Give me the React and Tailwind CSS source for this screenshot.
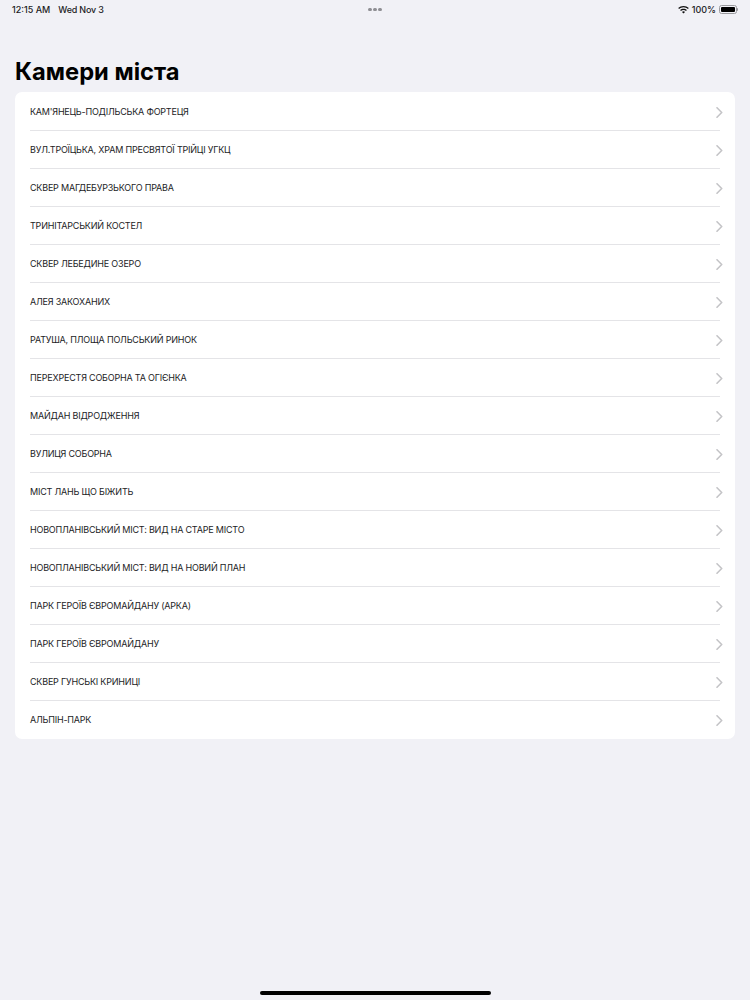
const cameras = [
  "КАМ'ЯНЕЦЬ-ПОДІЛЬСЬКА ФОРТЕЦЯ",
  "ВУЛ.ТРОЇЦЬКА, ХРАМ ПРЕСВЯТОЇ ТРІЙЦІ УГКЦ",
  "СКВЕР МАГДЕБУРЗЬКОГО ПРАВА",
  "ТРИНІТАРСЬКИЙ КОСТЕЛ",
  "СКВЕР ЛЕБЕДИНЕ ОЗЕРО",
  "АЛЕЯ ЗАКОХАНИХ",
  "РАТУША, ПЛОЩА ПОЛЬСЬКИЙ РИНОК",
  "ПЕРЕХРЕСТЯ СОБОРНА ТА ОГІЄНКА",
  "МАЙДАН ВІДРОДЖЕННЯ",
  "ВУЛИЦЯ СОБОРНА",
  "МІСТ ЛАНЬ ЩО БІЖИТЬ",
  "НОВОПЛАНІВСЬКИЙ МІСТ: ВИД НА СТАРЕ МІСТО",
  "НОВОПЛАНІВСЬКИЙ МІСТ: ВИД НА НОВИЙ ПЛАН",
  "ПАРК ГЕРОЇВ ЄВРОМАЙДАНУ (АРКА)",
  "ПАРК ГЕРОЇВ ЄВРОМАЙДАНУ",
  "СКВЕР ГУНСЬКІ КРИНИЦІ",
  "АЛЬПІН-ПАРК",
];

function Chevron() {
  return (
    <svg width="7" height="11" viewBox="0 0 7 11" fill="none" className="shrink-0">
      <path d="M1 0.8L5.7 5.5L1 10.2" stroke="#c4c4c7" strokeWidth="1.6" strokeLinecap="round" strokeLinejoin="round" />
    </svg>
  );
}

function Wifi() {
  return (
    <svg width="11" height="8" viewBox="0 0 11 8" fill="#111">
      <path d="M5.5 0C3.4 0 1.6 0.8 0.2 2.1L1.1 3.1C2.3 2 3.8 1.3 5.5 1.3C7.2 1.3 8.7 2 9.9 3.1L10.8 2.1C9.4 0.8 7.6 0 5.5 0Z" />
      <path d="M5.5 2.7C4.2 2.7 3 3.2 2.1 4L3 5C3.7 4.4 4.5 4 5.5 4C6.5 4 7.3 4.4 8 5L8.9 4C8 3.2 6.8 2.7 5.5 2.7Z" />
      <path d="M5.5 5.3C4.9 5.3 4.4 5.5 4 5.9L5.5 7.6L7 5.9C6.6 5.5 6.1 5.3 5.5 5.3Z" />
    </svg>
  );
}

function Battery() {
  return (
    <div className="flex items-center">
      <div className="w-[18px] h-[9px] rounded-[2.5px] border border-[#9a9a9e] p-[1px]">
        <div className="w-full h-full rounded-[1px] bg-black" />
      </div>
      <div className="w-[1px] h-[3px] bg-[#9a9a9e] rounded-r-sm" />
    </div>
  );
}

function StatusBar() {
  return (
    <div className="h-[18px] pt-px pl-3 pr-[12px] flex items-center text-[9px] font-medium text-[#1c1c1e]">
      <div className="flex-1 flex gap-2">
        <span>12:15 AM</span>
        <span className="tracking-[-0.2px]">Wed Nov 3</span>
      </div>
      <div className="flex gap-[1.5px]">
        <span className="w-[3.5px] h-[3.5px] rounded-full bg-[#8e8e93]" />
        <span className="w-[3.5px] h-[3.5px] rounded-full bg-[#8e8e93]" />
        <span className="w-[3.5px] h-[3.5px] rounded-full bg-[#8e8e93]" />
      </div>
      <div className="flex-1 flex items-center justify-end gap-[3px]">
        <Wifi />
        <span>100%</span>
        <Battery />
      </div>
    </div>
  );
}

export default function App() {
  return (
    <div className="min-h-[1000px] flex flex-col bg-[#f1f1f6] font-['Inter',sans-serif] text-black">
      <StatusBar />
      <h1 className="mt-[38px] mb-px px-[15px] h-[35px] text-[23.7px] leading-[32px] font-bold">Камери міста</h1>
      <ul className="mx-[15px] pt-px bg-white rounded-[7px] pl-[15px]">
        {cameras.map((name, i) => (
          <li key={name} className="h-[38px] flex items-center pr-[12px] relative">
            <span className="flex-1 text-[9px] tracking-[-0.2px] text-[#1c1c1e]">{name}</span>
            <Chevron />
            {i < cameras.length - 1 && (
              <div className="absolute left-0 right-[15px] bottom-0 h-px bg-[#e4e4e7]" />
            )}
          </li>
        ))}
      </ul>
      <div className="mt-auto pb-[5px] flex justify-center">
        <div className="w-[231px] h-[4px] rounded-full bg-black" />
      </div>
    </div>
  );
}
